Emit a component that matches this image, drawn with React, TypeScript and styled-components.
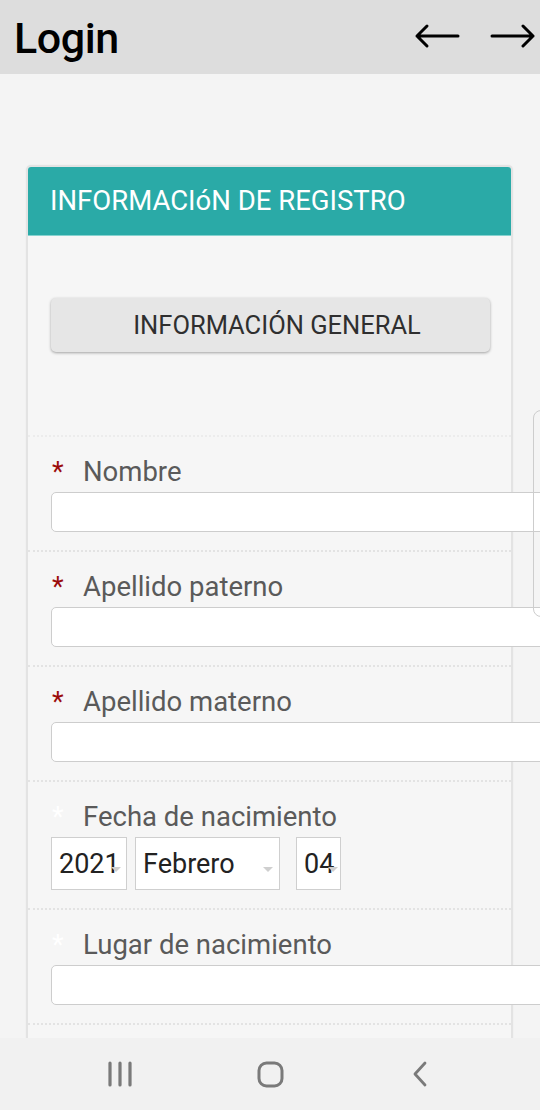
import React from "react";
import styled, { createGlobalStyle } from "styled-components";

const GlobalStyle = createGlobalStyle`
  html, body { margin: 0; padding: 0; background: #f4f4f4; }
  body { font-family: Roboto, "Noto Sans", "Liberation Sans", sans-serif; }
  * { box-sizing: border-box; }
`;

const Screen = styled.div`
  position: relative;
  width: 540px;
  height: 1110px;
  display: flex;
  flex-direction: column;
  overflow: hidden;
  background: #f4f4f4;
`;

const TopBar = styled.header`
  height: 74px;
  flex: none;
  background: #dddddd;
  display: flex;
  align-items: center;
  justify-content: space-between;
  padding: 2px 4px 0 14px;
`;

const Title = styled.h1`
  margin: 0;
  font-size: 43px;
  font-weight: 500;
  color: #000;
  letter-spacing: -0.4px;
`;

const Arrows = styled.div`
  display: flex;
  align-items: center;
  gap: 30px;
  margin-bottom: 4px;
`;

const Content = styled.main`
  flex: 1;
  overflow: hidden;
  padding: 91px 27px 0 26px;
`;

const Card = styled.section`
  border: 2px solid #e3e3e3;
  border-bottom: none;
  border-radius: 5px 5px 0 0;
  background: #f6f6f6;
  box-shadow: 0 0 2px rgba(0, 0, 0, 0.06);
`;

const CardHeader = styled.div`
  height: 69px;
  background: #2aaaa7;
  border-bottom: 1px solid #86d2cf;
  border-radius: 3px 3px 0 0;
  display: flex;
  align-items: center;
  padding: 0 0 2px 22px;
  color: #ffffff;
  font-size: 27.5px;
`;

const ButtonArea = styled.div`
  padding: 62px 21px 83px 23px;
`;

const SectionButton = styled.button`
  width: 100%;
  height: 54px;
  border: none;
  border-radius: 5px;
  background: #e6e6e6;
  box-shadow: 0 1px 3px rgba(0, 0, 0, 0.35);
  font-family: inherit;
  font-size: 25.5px;
  color: #2f2f2f;
  padding: 0 0 0 13px;
`;

const FieldRow = styled.div<{ $faint?: boolean }>`
  border-top: 2px dotted ${(p) => (p.$faint ? "#ececec" : "#e3e3e3")};
  padding: 16px 0 18px 23px;
`;

const CardRest = styled.div`
  border-top: 2px dotted #e3e3e3;
  height: 60px;
`;

const LabelLine = styled.div`
  height: 36px;
  display: flex;
  align-items: center;
  margin-bottom: 3px;
`;

const Star = styled.span<{ $light?: boolean }>`
  width: 32px;
  flex: none;
  font-size: 27px;
  line-height: 1;
  padding-left: 1px;
  margin-top: 2px;
  color: ${(p) => (p.$light ? "#ffffff" : "#9b0b0b")};
`;

const Label = styled.label`
  font-size: 27.5px;
  color: #5a5a5a;
`;

const TextInput = styled.div`
  width: 520px;
  height: 40px;
  background: #ffffff;
  border: 1.5px solid #cdcdcd;
  border-radius: 5px;
`;

const DateLine = styled.div`
  display: flex;
  align-items: stretch;
  height: 53px;
`;

const DateSelect = styled.div<{ $w: number; $gap: number; $arrowRight: number }>`
  position: relative;
  width: ${(p) => p.$w}px;
  margin-right: ${(p) => p.$gap}px;
  background: #ffffff;
  border: 1.5px solid #cfcfcf;
  display: flex;
  align-items: center;
  padding-left: 7px;
  font-size: 27px;
  color: #222;
  &::after {
    content: "";
    position: absolute;
    right: ${(p) => p.$arrowRight}px;
    top: 29px;
    border-left: 5px solid transparent;
    border-right: 5px solid transparent;
    border-top: 5px solid #cfcfcf;
  }
`;

const SidePanel = styled.div`
  position: absolute;
  left: 533px;
  top: 410px;
  width: 40px;
  height: 207px;
  border: 1.5px solid #cdcdcd;
  border-radius: 8px;
  z-index: 2;
`;

const NavBar = styled.nav`
  height: 72px;
  flex: none;
  background: #f1f1f1;
  display: flex;
  align-items: center;
  padding-left: 45px;
`;

const NavSlot = styled.div`
  width: 150px;
  display: flex;
  justify-content: center;
  align-items: center;
`;

const ArrowLeft = () => (
  <svg width="46" height="26" viewBox="0 0 46 26" fill="none">
    <path d="M3 13 H44 M13 3 L3 13 L13 23" stroke="#000" strokeWidth="3" strokeLinecap="round" strokeLinejoin="round" />
  </svg>
);

const ArrowRight = () => (
  <svg width="46" height="26" viewBox="0 0 46 26" fill="none">
    <path d="M2 13 H43 M33 3 L43 13 L33 23" stroke="#000" strokeWidth="3" strokeLinecap="round" strokeLinejoin="round" />
  </svg>
);

const RecentsIcon = () => (
  <svg width="26" height="26" viewBox="0 0 26 26" fill="none">
    <path d="M3 2 V24 M13 2 V24 M23 2 V24" stroke="#7a7a7a" strokeWidth="3.2" strokeLinecap="round" />
  </svg>
);

const HomeIcon = () => (
  <svg width="27" height="27" viewBox="0 0 27 27" fill="none">
    <rect x="2" y="2" width="23" height="23" rx="7.5" stroke="#7a7a7a" strokeWidth="3" />
  </svg>
);

const BackIcon = () => (
  <svg width="16" height="26" viewBox="0 0 16 26" fill="none">
    <path d="M13 2 L3 13 L13 24" stroke="#7a7a7a" strokeWidth="2.8" strokeLinecap="round" strokeLinejoin="round" />
  </svg>
);

type Field = { label: string; required: boolean };

const fieldsTop: Field[] = [
  { label: "Nombre", required: true },
  { label: "Apellido paterno", required: true },
  { label: "Apellido materno", required: true },
];

export default function App() {
  return (
    <>
      <GlobalStyle />
      <Screen>
        <TopBar>
          <Title>Login</Title>
          <Arrows>
            <ArrowLeft />
            <ArrowRight />
          </Arrows>
        </TopBar>
        <Content>
          <Card>
            <CardHeader>INFORMACIóN DE REGISTRO</CardHeader>
            <ButtonArea>
              <SectionButton>INFORMACIÓN GENERAL</SectionButton>
            </ButtonArea>
            {fieldsTop.map((f, i) => (
              <FieldRow key={f.label} $faint={i === 0}>
                <LabelLine>
                  <Star $light={!f.required}>*</Star>
                  <Label>{f.label}</Label>
                </LabelLine>
                <TextInput />
              </FieldRow>
            ))}
            <FieldRow>
              <LabelLine>
                <Star $light>*</Star>
                <Label>Fecha de nacimiento</Label>
              </LabelLine>
              <DateLine>
                <DateSelect $w={76} $gap={8} $arrowRight={5}>2021</DateSelect>
                <DateSelect $w={145} $gap={16} $arrowRight={6}>Febrero</DateSelect>
                <DateSelect $w={45} $gap={0} $arrowRight={2}>04</DateSelect>
              </DateLine>
            </FieldRow>
            <FieldRow>
              <LabelLine>
                <Star $light>*</Star>
                <Label>Lugar de nacimiento</Label>
              </LabelLine>
              <TextInput />
            </FieldRow>
            <CardRest />
          </Card>
        </Content>
        <SidePanel />
        <NavBar>
          <NavSlot><RecentsIcon /></NavSlot>
          <NavSlot><HomeIcon /></NavSlot>
          <NavSlot><BackIcon /></NavSlot>
        </NavBar>
      </Screen>
    </>
  );
}
